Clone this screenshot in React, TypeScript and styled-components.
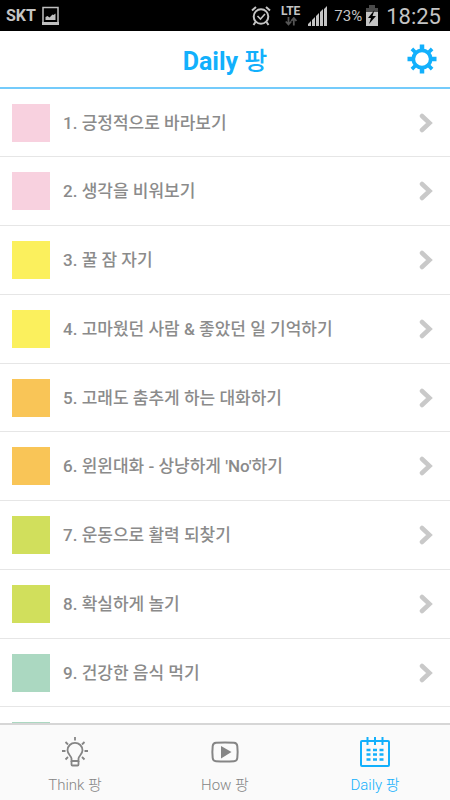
import React from "react";
import styled, { createGlobalStyle } from "styled-components";

const BLUE = "#12b0fc";

const GlobalStyle = createGlobalStyle`
  *, *::before, *::after { box-sizing: border-box; }
  body {
    margin: 0;
    background: #fff;
    font-family: Roboto, "Noto Sans CJK KR", sans-serif;
  }
`;

const Screen = styled.div`
  display: flex;
  flex-direction: column;
  height: 100vh;
  overflow: hidden;
`;

const StatusBar = styled.div`
  flex: none;
  display: flex;
  align-items: center;
  justify-content: space-between;
  height: 31px;
  padding: 0 9px 0 6px;
  background: #000;
  color: #c4c4c4;
`;

const StatusGroup = styled.div`
  display: flex;
  align-items: center;
  gap: 6px;
`;

const Carrier = styled.span`
  font-size: 16px;
  font-weight: 700;
`;

const Network = styled.div`
  display: flex;
  flex-direction: column;
  align-items: center;
  margin: 0 2px 0 4px;
  font-size: 12px;
  line-height: 12px;
  font-weight: 700;
`;

const Percent = styled.span`
  font-size: 15px;
  margin-right: -3px;
`;

const Clock = styled.time`
  margin-left: 1px;
  font-size: 22px;
  line-height: 32px;
  padding-top: 2px;
`;

const Header = styled.header`
  flex: none;
  display: grid;
  grid-template-columns: 48px 1fr 48px;
  align-items: center;
  height: 58px;
  padding: 0 4px;
  border-bottom: 2px solid #74cbfb;
  background: #fff;
`;

const Title = styled.h1`
  grid-column: 2;
  margin: 0;
  padding-top: 5px;
  color: ${BLUE};
  font-size: 25px;
  line-height: 32px;
  font-weight: 500;
  text-align: center;
`;

const Strong = styled.strong`
  font-weight: 700;
`;

const SettingsButton = styled.button`
  display: flex;
  align-items: center;
  justify-content: center;
  height: 48px;
  padding: 0;
  border: 0;
  background: none;
  color: ${BLUE};
  cursor: pointer;
`;

const List = styled.ul`
  flex: 1;
  min-height: 0;
  margin: 0;
  padding: 0;
  overflow: hidden;
  list-style: none;
`;

const ItemLink = styled.a`
  display: flex;
  align-items: center;
  gap: 13px;
  padding: 15px 17px 15px 12px;
  color: #8b8b8b;
  font-size: 17px;
  line-height: 24px;
  font-weight: 500;
  text-decoration: none;
`;

const Item = styled.li`
  border-bottom: 1px solid #e6e6e6;

  &:nth-child(4n + 1) ${ItemLink} {
    padding-bottom: 14px;
  }
`;

const Swatch = styled.span<{ $color: string }>`
  flex: none;
  width: 38px;
  height: 38px;
  background: ${(p) => p.$color};
`;

const Label = styled.span`
  flex: 1;
`;

const TabBar = styled.nav`
  flex: none;
  display: grid;
  grid-template-columns: repeat(3, 1fr);
  height: 77px;
  border-top: 2px solid #d6d6d6;
  background: #fafafa;
`;

const Tab = styled.button<{ $active?: boolean }>`
  display: flex;
  flex-direction: column;
  align-items: center;
  gap: 4px;
  padding: 12px 0 0;
  border: 0;
  background: none;
  color: ${(p) => (p.$active ? BLUE : "#858585")};
  font-family: inherit;
  font-size: 15px;
  line-height: 24px;
  font-weight: 300;
  cursor: pointer;
`;

const PictureIcon = () => (
  <svg width="18" height="20" viewBox="0 0 18 20" aria-hidden="true">
    <rect x="1" y="1.5" width="15" height="16" fill="none" stroke="#c0c0c0" strokeWidth="1.500" />
    <path d="M0 16h17v3H0z" fill="#c0c0c0" />
    <path d="M3.500 14v-3l2-1 2 1.500 3-3 1 .5 2-1.500V14z" fill="#c0c0c0" />
  </svg>
);

const AlarmIcon = () => (
  <svg width="20" height="22" viewBox="0 0 20 22" fill="none" stroke="#c4c4c4" strokeWidth="2" aria-hidden="true">
    <circle cx="10" cy="11.500" r="7.300" />
    <path d="M6.500 11l3 3 4.500-5" strokeWidth="1.600" />
    <path d="M1 5.500L5 2M19 5.500L15 2M4.500 17l-2 3M15.500 17l2 3" />
  </svg>
);

const DataArrows = () => (
  <svg width="12" height="9" viewBox="0 0 12 9" fill="none" stroke="#555" strokeWidth="1.800" aria-hidden="true">
    <path d="M3.500 0v7M.8 4.500l2.700 3 2.700-3M8.800 8.500V1.500M6.200 4l2.600-3 2.600 3" />
  </svg>
);

const SignalIcon = () => (
  <svg width="20" height="20" viewBox="0 0 20 20" fill="#c4c4c4" aria-hidden="true">
    <path d="M0 20v-2l3-3v5zM4 20v-6l3-3v9zM8 20V10l3-3v13zM12 20V6l3-3v17zM16 20V3l3-3v20z" />
  </svg>
);

const BatteryIcon = () => (
  <svg width="14" height="21" viewBox="0 0 14 21" aria-hidden="true">
    <path d="M4 0h6v3h3v4H1V3h3z" fill="#4a4a4a" />
    <path d="M1 7h12v14H1z" fill="#c4c4c4" />
    <path d="M9.500 5L3 13h3l-2 6 7-8H7.500z" fill="#000" />
  </svg>
);

const GearIcon = () => (
  <svg width="30" height="30" viewBox="-15 -15 30 30" fill="none" stroke="currentColor" aria-hidden="true">
    <circle r="8.700" strokeWidth="3.700" />
    <path d="M0-9V-14.500M0 9V14.500M-9 0H-14.500M9 0H14.500" strokeWidth="4.500" />
    <path d="M-6.500-6.500l-3.600-3.600M6.500-6.500l3.600-3.600M-6.500 6.500l-3.600 3.600M6.500 6.500l3.600 3.600" strokeWidth="3.700" />
  </svg>
);

const Chevron = () => (
  <svg width="14" height="20" viewBox="0 0 14 20" fill="none" stroke="#c9c9c9" strokeWidth="4.500" strokeLinecap="round" aria-hidden="true">
    <path d="M3 3l7.500 7L3 17" />
  </svg>
);

const BulbIcon = () => (
  <svg width="32" height="32" viewBox="0 0 32 32" fill="none" stroke="currentColor" strokeWidth="1.800" aria-hidden="true">
    <path d="M12.500 24v-2.500c0-2.500-4-4-4-8.200a7.500 7.500 0 0 1 15 0c0 4.200-4 5.700-4 8.200V24z" />
    <path d="M12.500 24v3.500q0 1 1 1h5q1 0 1-1V24" />
    <path d="M16 0v3.500M3 14h3.500M25.500 14H29M6.500 5l2.500 2.500M25.500 5L23 7.500M6.500 22.500L9 20M25.500 22.500L23 20" />
  </svg>
);

const VideoIcon = () => (
  <svg width="32" height="32" viewBox="0 0 32 32" fill="none" stroke="currentColor" strokeWidth="2" aria-hidden="true">
    <path d="M7 5.800Q16 5 25 5.800Q28 6 28.300 9Q29 15 28.300 21Q28 24 25 24.200Q16 25 7 24.200Q4 24 3.700 21Q3 15 3.700 9Q4 6 7 5.800z" />
    <path d="M12 9l10.500 6L12 21.500z" fill="currentColor" stroke="none" />
  </svg>
);

const CalendarIcon = () => (
  <svg width="32" height="32" viewBox="0 0 32 32" fill="none" stroke="currentColor" strokeWidth="2" aria-hidden="true">
    <rect x="2" y="4" width="28" height="25" rx="1" />
    <path d="M8.500 0v8M16 0v8M23.500 0v8" />
    <path d="M7.500 13h17M7.500 17.500h17M7.500 22.500h17" strokeWidth="2.500" strokeDasharray="4 2.500" />
  </svg>
);

const items = [
  { text: "긍정적으로 바라보기", color: "#f8d1df" },
  { text: "생각을 비워보기", color: "#f8d1df" },
  { text: "꿀 잠 자기", color: "#fbf05d" },
  { text: "고마웠던 사람 & 좋았던 일 기억하기", color: "#fbf05d" },
  { text: "고래도 춤추게 하는 대화하기", color: "#f9c557" },
  { text: "윈윈대화 - 상냥하게 'No'하기", color: "#f9c557" },
  { text: "운동으로 활력 되찾기", color: "#d1df5c" },
  { text: "확실하게 놀기", color: "#d1df5c" },
  { text: "건강한 음식 먹기", color: "#abd8c1" },
];

export default function App() {
  return (
    <Screen lang="ko">
      <GlobalStyle />
      <StatusBar>
        <StatusGroup>
          <Carrier>SKT</Carrier>
          <PictureIcon />
        </StatusGroup>
        <StatusGroup>
          <AlarmIcon />
          <Network>
            LTE
            <DataArrows />
          </Network>
          <SignalIcon />
          <Percent>73%</Percent>
          <BatteryIcon />
          <Clock>18:25</Clock>
        </StatusGroup>
      </StatusBar>
      <Header>
        <Title>
          <Strong>Daily</Strong> 팡
        </Title>
        <SettingsButton type="button" aria-label="설정">
          <GearIcon />
        </SettingsButton>
      </Header>
      <List>
        {items.map((item, i) => (
          <Item key={item.text}>
            <ItemLink href="#">
              <Swatch $color={item.color} />
              <Label>
                {i + 1}. {item.text}
              </Label>
              <Chevron />
            </ItemLink>
          </Item>
        ))}
        <Item aria-hidden="true">
          <ItemLink as="div">
            <Swatch $color="#abd8c1" />
          </ItemLink>
        </Item>
      </List>
      <TabBar>
        <Tab type="button">
          <BulbIcon />
          Think 팡
        </Tab>
        <Tab type="button">
          <VideoIcon />
          How 팡
        </Tab>
        <Tab type="button" $active aria-current="page">
          <CalendarIcon />
          Daily 팡
        </Tab>
      </TabBar>
    </Screen>
  );
}
